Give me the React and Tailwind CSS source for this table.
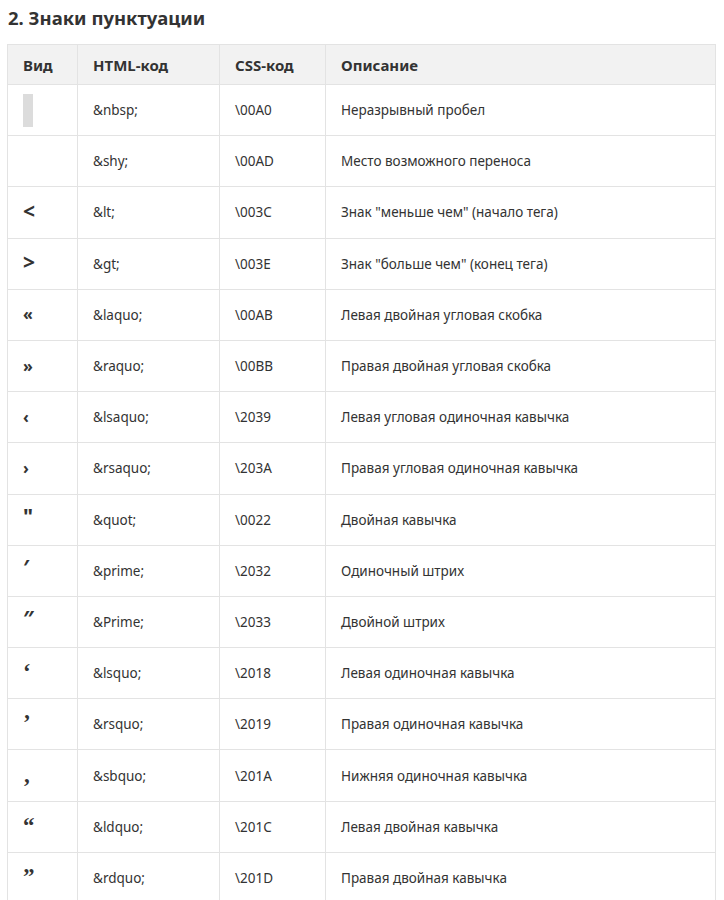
const sans = "text-[21px] font-bold leading-[20px]";
const high = "text-[21px] font-bold leading-[20px] align-[4px]";
const small = "text-[16px] font-bold leading-[20px]";
const serif = "text-[23px] font-bold leading-[20px] font-['Liberation_Serif',serif]";

const rows = [
  { v: "nbsp", html: "&nbsp;", css: "\\00A0", d: "Неразрывный пробел" },
  { v: "", html: "&shy;", css: "\\00AD", d: "Место возможного переноса" },
  { v: "<", g: sans, html: "&lt;", css: "\\003C", d: "Знак \"меньше чем\" (начало тега)" },
  { v: ">", g: sans, html: "&gt;", css: "\\003E", d: "Знак \"больше чем\" (конец тега)" },
  { v: "«", g: small, html: "&laquo;", css: "\\00AB", d: "Левая двойная угловая скобка" },
  { v: "»", g: small, html: "&raquo;", css: "\\00BB", d: "Правая двойная угловая скобка" },
  { v: "‹", g: small, html: "&lsaquo;", css: "\\2039", d: "Левая угловая одиночная кавычка" },
  { v: "›", g: small, html: "&rsaquo;", css: "\\203A", d: "Правая угловая одиночная кавычка" },
  { v: "\"", g: high, html: "&quot;", css: "\\0022", d: "Двойная кавычка" },
  { v: "′", g: high, html: "&prime;", css: "\\2032", d: "Одиночный штрих" },
  { v: "″", g: high, html: "&Prime;", css: "\\2033", d: "Двойной штрих" },
  { v: "‘", g: serif, html: "&lsquo;", css: "\\2018", d: "Левая одиночная кавычка" },
  { v: "’", g: serif, html: "&rsquo;", css: "\\2019", d: "Правая одиночная кавычка" },
  { v: "‚", g: serif, html: "&sbquo;", css: "\\201A", d: "Нижняя одиночная кавычка" },
  { v: "“", g: serif, html: "&ldquo;", css: "\\201C", d: "Левая двойная кавычка" },
  { v: "”", g: serif, html: "&rdquo;", css: "\\201D", d: "Правая двойная кавычка" },
];

export default function App() {
  return (
    <div className="min-h-screen bg-white text-[#333] font-['Noto_Sans',sans-serif] px-[7px] pt-[5px]">
      {/* Заголовок */}
      <h2 className="text-[18.5px] font-bold leading-[26px] pl-[1px] mb-[13px]">
        2. Знаки пунктуации
      </h2>

      {/* Таблица */}
      <table className="w-[709px] border-collapse text-[13.5px] leading-[20px]">
        <thead>
          <tr className="bg-[#f2f2f2] h-[40px]">
            <th className="w-[70px] border border-[#e3e3e3] px-[15px] py-0 text-left text-[15px] font-bold">Вид</th>
            <th className="w-[142px] border border-[#e3e3e3] px-[15px] py-0 text-left text-[15px] font-bold">HTML-код</th>
            <th className="w-[106px] border border-[#e3e3e3] px-[15px] py-0 text-left text-[15px] font-bold">CSS-код</th>
            <th className="border border-[#e3e3e3] px-[15px] py-0 text-left text-[15px] font-bold">Описание</th>
          </tr>
        </thead>
        <tbody>
          {rows.map((r) => (
            <tr key={r.html} className="h-[51.2px]">
              <td className="border border-[#e3e3e3] px-[15px] py-0 align-middle">
                {r.v === "nbsp" ? (
                  <span className="block w-[10px] h-[33px] bg-[#dcdcdc]" />
                ) : (
                  <span className={r.g}>{r.v}</span>
                )}
              </td>
              <td className="border border-[#e3e3e3] px-[15px] py-0">{r.html}</td>
              <td className="border border-[#e3e3e3] px-[15px] py-0">{r.css}</td>
              <td className="border border-[#e3e3e3] px-[15px] py-0">{r.d}</td>
            </tr>
          ))}
        </tbody>
      </table>
    </div>
  );
}
